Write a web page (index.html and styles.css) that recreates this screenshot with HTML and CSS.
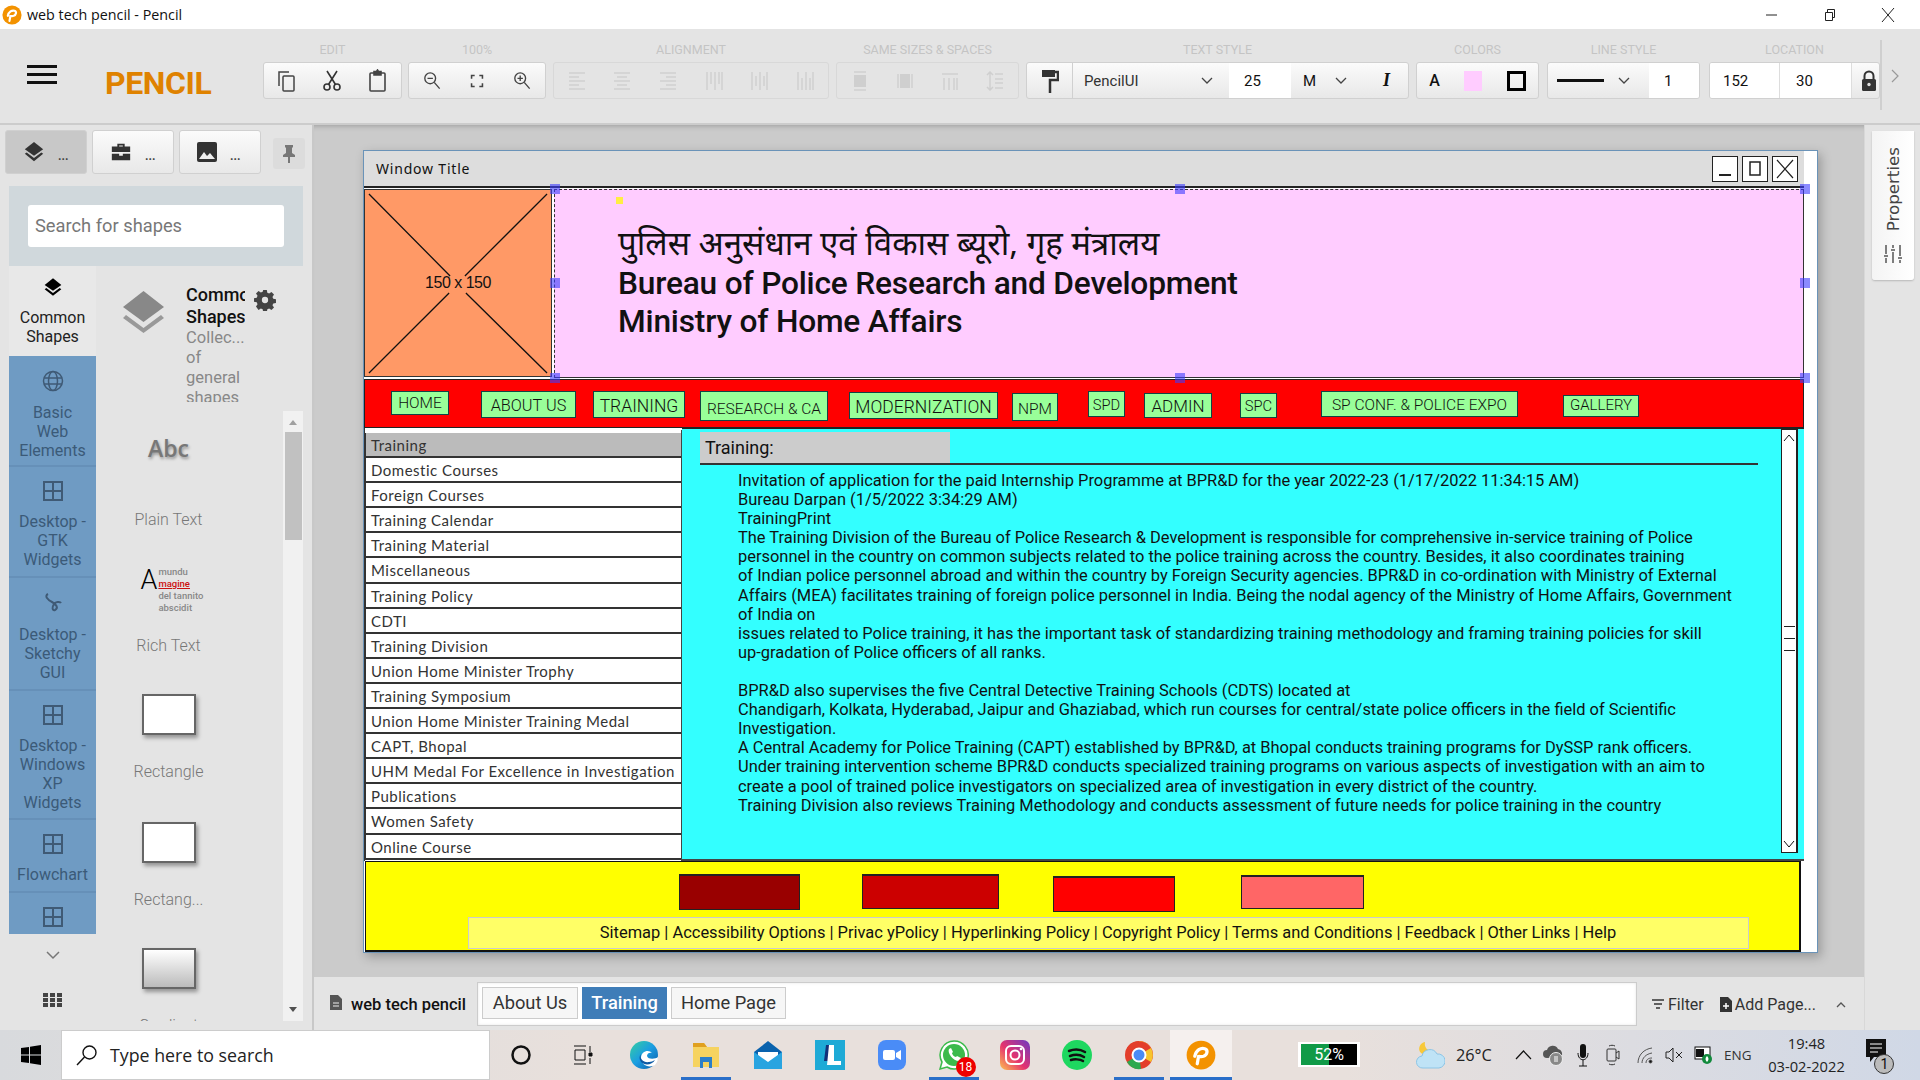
FILE: index.html
```html
<!DOCTYPE html>
<html lang="en">
<head>
<meta charset="utf-8">
<title>web tech pencil - Pencil</title>
<link rel="stylesheet" href="styles.css">
</head>
<body>
<svg class="defs" width="0" height="0">
  <symbol id="grid4" viewBox="0 0 20 20"><path d="M1 1h18v18H1zM10 1v18M1 10h18" fill="none" stroke="currentColor" stroke-width="2"/></symbol>
  <symbol id="layers" viewBox="0 0 24 24"><path d="M12 1 2 9l10 7 10-7z" fill="currentColor"/><path d="m2 14 10 8 10-8-2-1.500-8 6-8-6z" fill="currentColor"/></symbol>
  <symbol id="pencilp" viewBox="0 0 24 24"><circle cx="12" cy="12" r="11.500" fill="#f39200"/><path d="M7 13c1-5 5-7 8-6 3 1 2 5-1 6-2 .6-3 0-4 .2L9 19" fill="none" stroke="#fff" stroke-width="2.600" stroke-linecap="round"/></symbol>
</svg>

<header class="titlebar">
  <svg class="app-ico" width="20" height="24" viewBox="0 0 24 24"><use href="#pencilp"/></svg>
  <span class="app-title">web tech pencil - Pencil</span>
  <div class="winctl">
    <svg width="16" height="16" viewBox="0 0 16 16"><path d="M2 8h11" stroke="#222" fill="none"/></svg>
    <svg width="16" height="16" viewBox="0 0 16 16"><path d="M3.500 5.500h7v8h-7zM5.500 5.500v-3h7v8h-2" stroke="#222" fill="none"/></svg>
    <svg width="16" height="16" viewBox="0 0 16 16"><path d="m2 1 12 14M14 1 2 15" stroke="#222" fill="none"/></svg>
  </div>
</header>

<div class="toolbar">
  <div class="burger"><i></i><i></i><i></i></div>
  <div class="logo">PENCIL</div>
  <div class="tb-sec s1"><div class="tb-label">EDIT</div><div class="tb-group">
    <svg width="22" height="24" viewBox="0 0 22 24" fill="none" stroke="#444" stroke-width="1.500"><path d="M3 17V3h10"/><rect x="7" y="7" width="11" height="15" rx="1"/></svg>
    <svg width="22" height="24" viewBox="0 0 22 24" fill="none" stroke="#333" stroke-width="1.600"><circle cx="6" cy="18" r="3"/><circle cx="16" cy="18" r="3"/><path d="M7.500 15.500 16 2M14.500 15.500 6 2"/></svg>
    <svg width="22" height="24" viewBox="0 0 22 24" fill="none" stroke="#444" stroke-width="1.600"><rect x="3" y="4" width="15" height="18" rx="1"/><path d="M7 4V2.500h2.500L10.500 1l1 1.500H14V6H7z" fill="#444"/></svg>
  </div></div>
  <div class="tb-sec s2"><div class="tb-label">100%</div><div class="tb-group">
    <svg width="18" height="20" viewBox="0 0 20 22" fill="none" stroke="#444" stroke-width="1.500"><circle cx="8" cy="8" r="6"/><path d="m12.500 12.500 6 7M5 8h6"/></svg>
    <svg width="14" height="14" viewBox="0 0 18 18" fill="none" stroke="#444" stroke-width="2"><path d="M2 6V2h4M12 2h4v4M16 12v4h-4M6 16H2v-4"/></svg>
    <svg width="18" height="20" viewBox="0 0 20 22" fill="none" stroke="#444" stroke-width="1.500"><circle cx="8" cy="8" r="6"/><path d="m12.500 12.500 6 7M5 8h6M8 5v6"/></svg>
  </div></div>
  <div class="tb-sec s3"><div class="tb-label">ALIGNMENT</div><div class="tb-group dim">
    <svg width="18" height="20" viewBox="0 0 18 20"><path d="M1 2h16M1 6h10M1 10h16M1 14h10M1 18h16"/></svg>
    <svg width="18" height="20" viewBox="0 0 18 20"><path d="M1 2h16M4 6h10M1 10h16M4 14h10M1 18h16"/></svg>
    <svg width="18" height="20" viewBox="0 0 18 20"><path d="M1 2h16M7 6h10M1 10h16M7 14h10M1 18h16"/></svg>
    <svg width="18" height="20" viewBox="0 0 18 20"><path d="M2 1v18M6 1v12M10 1v18M14 1v12M17 1v18"/></svg>
    <svg width="18" height="20" viewBox="0 0 18 20"><path d="M2 1v18M6 5v10M10 1v18M14 5v10M17 1v18"/></svg>
    <svg width="18" height="20" viewBox="0 0 18 20"><path d="M2 1v18M6 7v12M10 1v18M14 7v12M17 1v18"/></svg>
  </div></div>
  <div class="tb-sec s4"><div class="tb-label">SAME SIZES &amp; SPACES</div><div class="tb-group dim">
    <svg width="18" height="20" viewBox="0 0 18 20"><path d="M3 1h12M3 19h12"/><path class="fill" d="M3 4h12v12H3z"/></svg>
    <svg width="18" height="20" viewBox="0 0 18 20"><path d="M2 3v14M16 3v14"/><path class="fill" d="M4 3h10v14H4z"/></svg>
    <svg width="18" height="20" viewBox="0 0 18 20"><path d="M1 3h16M3 7v12M8 7v12M13 7v12M16 7v12"/></svg>
    <svg width="18" height="20" viewBox="0 0 18 20"><path d="M4 1v18M1 4l3-3 3 3M1 16l3 3 3-3M9 3h8M9 8h8M9 12h8M9 17h8"/></svg>
  </div></div>
  <div class="tb-sec s5"><div class="tb-label">TEXT STYLE</div><div class="tb-group seg">
    <div class="cell c-brush"><svg width="18" height="26" viewBox="0 0 18 26"><path d="M1 2h13v7H1z" fill="#333"/><path d="M14 4h3v8H9v13" fill="none" stroke="#333" stroke-width="2.500"/></svg></div>
    <div class="cell c-font"><span>PencilUI</span><svg width="12" height="8" viewBox="0 0 12 8"><path d="m1 1 5 5 5-5" fill="none" stroke="#444" stroke-width="1.300"/></svg></div>
    <div class="cell c-size">25</div>
    <div class="cell c-weight"><span>M</span><svg width="12" height="8" viewBox="0 0 12 8"><path d="m1 1 5 5 5-5" fill="none" stroke="#444" stroke-width="1.300"/></svg><b class="ital">I</b></div>
  </div></div>
  <div class="tb-sec s6"><div class="tb-label">COLORS</div><div class="tb-group">
    <span class="col-a">A</span><i class="col-pink"></i><i class="col-box"></i>
  </div></div>
  <div class="tb-sec s7"><div class="tb-label">LINE STYLE</div><div class="tb-group seg">
    <div class="cell c-line"><i class="line-sample"></i><svg width="12" height="8" viewBox="0 0 12 8"><path d="m1 1 5 5 5-5" fill="none" stroke="#444" stroke-width="1.300"/></svg></div>
    <div class="cell c-lw">1</div>
  </div></div>
  <div class="tb-sec s8"><div class="tb-label">LOCATION</div><div class="tb-group seg">
    <div class="cell c-loc">152</div><div class="cell c-loc">30</div>
    <div class="cell c-lock"><svg width="16" height="22" viewBox="0 0 16 22"><path d="M3.500 9V6a4.500 4.500 0 0 1 9 0v3" fill="none" stroke="#333" stroke-width="2"/><rect x="1" y="9" width="14" height="12" rx="1.500" fill="#333"/><circle cx="8" cy="14.500" r="1.700" fill="#ddd"/></svg></div>
  </div></div>
  <i class="tb-sep"></i>
  <svg class="tb-more" width="10" height="16" viewBox="0 0 10 16"><path d="m2 2 6 6-6 6" fill="none" stroke="#999" stroke-width="1.200"/></svg>
</div>

<main class="main">
  <aside class="left">
    <div class="left-tabs">
      <div class="ltab active"><svg width="22" height="22" viewBox="0 0 24 24" class="ink"><use href="#layers"/></svg><span>...</span></div>
      <div class="ltab"><svg width="22" height="22" viewBox="0 0 24 24"><path d="M8 6V3h8v3h6v6H2V6zm2-1v1h4V5zM2 14h8v2h4v-2h8v7H2z" fill="#333"/></svg><span>...</span></div>
      <div class="ltab"><svg width="20" height="20" viewBox="0 0 20 20"><rect width="20" height="20" rx="2" fill="#333"/><path d="m2 17 5-7 3 4 3-3 5 6z" fill="#eee"/></svg><span>...</span></div>
      <div class="pin"><svg width="14" height="20" viewBox="0 0 14 20"><path d="M3 1h8v2l-1 1v5l3 2v2H8v6H6v-6H1v-2l3-2V4L3 3z" fill="#777"/></svg></div>
    </div>
    <div class="search-wrap"><div class="search-box">Search for shapes</div></div>
    <div class="left-body">
      <div class="coll-col">
        <div class="coll selected"><svg width="20" height="21" viewBox="0 0 24 24"><use href="#layers"/></svg><span>Common Shapes</span></div>
        <div class="coll c1"><svg width="22" height="22" viewBox="0 0 22 22" fill="none" stroke="currentColor" stroke-width="1.500"><circle cx="11" cy="11" r="9.500"/><ellipse cx="11" cy="11" rx="4.500" ry="9.500"/><path d="M2 8h18M2 14h18"/></svg><span>Basic Web Elements</span></div>
        <div class="coll c2"><svg width="20" height="20"><use href="#grid4"/></svg><span>Desktop - GTK Widgets</span></div>
        <div class="coll c3"><svg width="22" height="22" viewBox="0 0 22 22" fill="none" stroke="currentColor" stroke-width="2"><path d="M6 2c-4 2 0 6 4 8s7 6 3 8c-3 1-3-3-1-6 1-2 6-3 7-1"/></svg><span>Desktop - Sketchy GUI</span></div>
        <div class="coll c4"><svg width="20" height="20"><use href="#grid4"/></svg><span>Desktop - Windows XP Widgets</span></div>
        <div class="coll c5"><svg width="20" height="20"><use href="#grid4"/></svg><span>Flowchart</span></div>
        <div class="coll c6"><svg width="20" height="20"><use href="#grid4"/></svg></div>
        <div class="coll-foot">
          <svg width="14" height="9" viewBox="0 0 14 9"><path d="m1 1 6 6 6-6" fill="none" stroke="#777" stroke-width="1.500"/></svg>
          <svg width="19" height="14" viewBox="0 0 19 14"><path fill="#444" d="M0 0h5v4H0zM7 0h5v4H7zM14 0h5v4h-5zM0 5h5v4H0zM7 5h5v4H7zM14 5h5v4h-5zM0 10h5v4H0zM7 10h5v4H7zM14 10h5v4h-5z"/></svg>
        </div>
      </div>
      <div class="shapes">
        <div class="shapes-head">
          <svg class="head-ico" width="43" height="44" viewBox="0 0 43 44"><path d="M21.500 1 42 17 21.500 32 1 17z" fill="#888"/><path d="m1 28 3-3 17.500 13L39 25l3 3-20.500 15z" fill="#999"/></svg>
          <div class="head-text"><b>Common Shapes</b><span>Collec... of general shapes</span></div>
          <svg class="gear" width="22" height="22" viewBox="0 0 22 22"><path fill="#444" fill-rule="evenodd" d="M9 0h4l.6 3 2 .9 2.600-1.700 2.800 2.800-1.700 2.600.9 2 3 .6v4l-3 .6-.9 2 1.700 2.600-2.800 2.800-2.600-1.700-2 .9-.6 3H9l-.6-3-2-.9-2.600 1.700L1 18.200l1.700-2.600-.9-2-3-.6V9l3-.6.9-2L1 3.800 3.800 1l2.600 1.700 2-.9zM11 7.500a3.500 3.500 0 1 0 0 7 3.500 3.500 0 0 0 0-7z" transform="translate(1.100 1.100) scale(.9)"/></svg>
        </div>
        <div class="shape-list">
          <div class="shape-items">
            <div class="shape sh1"><div class="abc">Abc</div><label>Plain Text</label></div>
            <div class="shape sh2"><div class="rich"><em>A</em><p><s>mundu</s><u>magine</u><s>del tannito</s><s>abscidit</s></p></div><label>Rich Text</label></div>
            <div class="shape sh3"><div class="rect"></div><label>Rectangle</label></div>
            <div class="shape sh4"><div class="rect"></div><label>Rectang...</label></div>
            <div class="shape sh5"><div class="rect grad"></div><label>Gradient</label></div>
          </div>
          <div class="sbar"><i class="up"></i><i class="thumb"></i><i class="down"></i></div>
        </div>
      </div>
    </div>
  </aside>

  <section class="center">
    <div class="canvas">
      <div class="page">
        <div class="win">
          <div class="win-title"><span>Window Title</span>
            <div class="win-btns">
              <div><svg width="18" height="18" viewBox="0 0 18 18"><path d="M3 15h12" stroke="#222" stroke-width="2"/></svg></div>
              <div><svg width="18" height="18" viewBox="0 0 18 18"><path d="M4 2h10v13H4z" fill="none" stroke="#222" stroke-width="1.500"/></svg></div>
              <div><svg width="20" height="20" viewBox="0 0 20 20"><path d="m2 1 16 18M18 1 2 19" stroke="#222" stroke-width="1.200"/></svg></div>
            </div>
          </div>
          <div class="banner">
            <div class="ph"><svg class="ph-x" viewBox="0 0 188 186" preserveAspectRatio="none"><path d="M4 4 86 86M184 4 101 86M4 183 85 103M102 103 184 183" fill="none" stroke="#111" stroke-width="1.300"/></svg><span>150 x 150</span></div>
            <div class="pink">
              <div class="hin">पुलिस अनुसंधान एवं विकास ब्यूरो, गृह मंत्रालय</div>
              <div class="eng">Bureau of Police Research and Development</div>
              <div class="eng">Ministry of Home Affairs</div>
            </div>
            <i class="h h-tl"></i><i class="h h-ml"></i><i class="h h-bl"></i><i class="h h-tm"></i><i class="h h-bm"></i><i class="h h-tr"></i><i class="h h-mr"></i><i class="h h-br"></i><i class="ydot"></i>
          </div>
          <nav class="nav">
            <a class="nb n1">HOME</a><a class="nb n2">ABOUT US</a><a class="nb n3">TRAINING</a><a class="nb n4">RESEARCH &amp; CA</a><a class="nb n5">MODERNIZATION</a><a class="nb n6">NPM</a><a class="nb n7">SPD</a><a class="nb n8">ADMIN</a><a class="nb n9">SPC</a><a class="nb n10">SP CONF. &amp; POLICE EXPO</a><a class="nb n11">GALLERY</a>
          </nav>
          <div class="content">
            <ul class="menu">
              <li class="on">Training</li><li>Domestic Courses</li><li>Foreign Courses</li><li>Training Calendar</li><li>Training Material</li><li>Miscellaneous</li><li>Training Policy</li><li>CDTI</li><li>Training Division</li><li>Union Home Minister Trophy</li><li>Training Symposium</li><li>Union Home Minister Training Medal</li><li>CAPT, Bhopal</li><li>UHM Medal For Excellence in Investigation</li><li>Publications</li><li>Women Safety</li><li>Online Course</li>
            </ul>
            <div class="cyan">
              <div class="article">
                <div class="art-head"><div class="art-title">Training:</div></div>
                <p class="art-text">Invitation of application for the paid Internship Programme at BPR&amp;D for the year 2022-23 (1/17/2022 11:34:15 AM)<br>Bureau Darpan (1/5/2022 3:34:29 AM)<br>TrainingPrint<br>The Training Division of the Bureau of Police Research &amp; Development is responsible for comprehensive in-service training of Police<br>personnel in the country on common subjects related to the police training across the country. Besides, it also coordinates training<br>of Indian police personnel abroad and within the country by Foreign Security agencies. BPR&amp;D in co-ordination with Ministry of External<br>Affairs (MEA) facilitates training of foreign police personnel in India. Being the nodal agency of the Ministry of Home Affairs, Government<br>of India on<br>issues related to Police training, it has the important task of standardizing training methodology and framing training policies for skill<br>up-gradation of Police officers of all ranks.<br><br>BPR&amp;D also supervises the five Central Detective Training Schools (CDTS) located at<br>Chandigarh, Kolkata, Hyderabad, Jaipur and Ghaziabad, which run courses for central/state police officers in the field of Scientific<br>Investigation.<br>A Central Academy for Police Training (CAPT) established by BPR&amp;D, at Bhopal conducts training programs for DySSP rank officers.<br>Under training intervention scheme BPR&amp;D conducts specialized training programs on various aspects of investigation with an aim to<br>create a pool of trained police investigators on specialized area of investigation in every district of the country.<br>Training Division also reviews Training Methodology and conducts assessment of future needs for police training in the country</p>
              </div>
              <div class="vscroll">
                <svg width="14" height="10" viewBox="0 0 14 10"><path d="m2 8 5-6 5 6" fill="none" stroke="#111"/></svg>
                <div class="grip"><i></i><i></i><i></i></div>
                <svg width="14" height="10" viewBox="0 0 14 10"><path d="m2 2 5 6 5-6" fill="none" stroke="#111"/></svg>
              </div>
            </div>
          </div>
          <footer class="foot">
            <div class="swatches"><i class="sw s-a"></i><i class="sw s-b"></i><i class="sw s-c"></i><i class="sw s-d"></i></div>
            <div class="foot-links">Sitemap | Accessibility Options | Privac yPolicy | Hyperlinking Policy | Copyright Policy | Terms and Conditions | Feedback | Other Links | Help</div>
          </footer>
        </div>
      </div>
    </div>
    <div class="pagebar">
      <svg width="12" height="15" viewBox="0 0 12 15"><path d="M0 0h8l4 4v11H0z" fill="#555"/><path d="M3 8h6M3 11h6" stroke="#eee"/></svg>
      <b class="doc">web tech pencil</b>
      <div class="pages"><span class="ptab p1">About Us</span><span class="ptab p2 cur">Training</span><span class="ptab p3">Home Page</span></div>
      <div class="pb-act">
        <svg width="14" height="10" viewBox="0 0 14 10"><path d="M1 1h12M3 5h8M5 9h4" stroke="#333" stroke-width="1.500"/></svg><span class="a1">Filter</span>
        <svg width="12" height="15" viewBox="0 0 12 15"><path d="M0 0h8l4 4v11H0z" fill="#333"/><path d="M3 9h6M6 6v6" stroke="#fff" stroke-width="1.500"/></svg><span class="a2">Add Page...</span>
        <svg width="10" height="7" viewBox="0 0 10 7"><path d="m1 6 4-4 4 4" fill="none" stroke="#555" stroke-width="1.300"/></svg>
      </div>
    </div>
  </section>

  <aside class="props">
    <div class="props-tab">
      <span>Properties</span>
      <svg width="20" height="22" viewBox="0 0 20 20" fill="none" stroke="#555" stroke-width="1.500"><path d="M3 1v9M3 14v5M1 12h4M10 1v3M10 8v11M8 6h4M17 1v11M17 16v3M15 14h4"/></svg>
    </div>
  </aside>
</main>

<footer class="taskbar">
  <div class="start"><svg width="20" height="20" viewBox="0 0 20 20"><path d="M0 3l8-1v7.500H0zM9 1.800 20 0v9.500H9zM0 10.500h8V18l-8-1zM9 10.500h11V20L9 18.200z" fill="#000"/></svg></div>
  <div class="tsearch"><svg width="22" height="22" viewBox="0 0 22 22" fill="none" stroke="#111" stroke-width="1.400"><circle cx="13.500" cy="8.500" r="6.500"/><path d="M8.500 13 1 21"/></svg><span>Type here to search</span></div>
  <div class="tasks">
    <div class="ti"><svg width="22" height="22" viewBox="0 0 22 22"><circle cx="11" cy="11" r="8.500" fill="none" stroke="#111" stroke-width="2.500"/></svg></div>
    <div class="ti"><svg width="22" height="22" viewBox="0 0 22 22" fill="none" stroke="#111"><path d="M2 2h12M2 20h12M3 6h10v10H3zM18 2v6M18 14v6"/><path d="M17 9h3v3h-3z" fill="#111"/></svg></div>
    <div class="ti"><svg width="30" height="30" viewBox="0 0 30 30"><defs><linearGradient id="eg" x1="0" y1="0" x2="1" y2="1"><stop offset="0" stop-color="#36d0a0"/><stop offset=".5" stop-color="#1b9de2"/><stop offset="1" stop-color="#0c59a4"/></linearGradient></defs><circle cx="15" cy="15" r="14" fill="url(#eg)"/><path d="M29 17c-2 2-10 3-11-1 0-3 3-4 5-3-3-4-11-2-11 5 0 6 7 11 14 7 2-2 3-5 3-8z" fill="#fff"/><path d="M26 20c-3 5-10 6-14 2-2-3-2-6 0-8-2 5 3 9 8 8 2 0 4-1 6-2z" fill="#0c59a4"/></svg></div>
    <div class="ti on"><svg width="28" height="26" viewBox="0 0 28 26"><path d="M1 1h11l3 4h12v20H1z" fill="#f6d360"/><path d="M1 1h11l3 4H1z" fill="#e0a020"/><path d="M8 26V15h12v11h-3v-6h-6v6z" fill="#2c7fc9"/></svg></div>
    <div class="ti"><svg width="30" height="30" viewBox="0 0 30 30"><path d="M15 1 29 12v17H1V12z" fill="#0a62ad"/><path d="M5 12h20v8l-10 5-10-5z" fill="#fff"/><path d="M1 12l14 10 14-10v17H1z" fill="#29a4e0"/></svg></div>
    <div class="ti"><svg width="30" height="30" viewBox="0 0 30 30"><rect width="30" height="30" fill="#1eaad6"/><path d="M11 5h5v16h-7z" fill="#12307a"/><path d="M14 5h5v16h7v4H12z" fill="#fff"/></svg></div>
    <div class="ti"><svg width="28" height="30" viewBox="0 0 28 30"><rect width="28" height="30" rx="8" fill="#4a8cf7"/><rect x="5" y="10" width="12" height="10" rx="2" fill="#fff"/><path d="m18 13 5-3v10l-5-3z" fill="#fff"/></svg></div>
    <div class="ti on badge-host"><svg width="30" height="30" viewBox="0 0 30 30"><path d="M15 1a14 14 0 0 0-12 21L1 29l7-2A14 14 0 1 0 15 1z" fill="#fff" stroke="#3cba4b" stroke-width="1.500"/><circle cx="15" cy="15" r="11" fill="#3cba4b"/><path d="M10 9c-2 4 4 12 10 12l2-3-4-2-1 1c-2 0-4-3-4-4l1-1-2-4z" fill="#fff"/></svg><b class="badge">18</b></div>
    <div class="ti"><svg width="30" height="30" viewBox="0 0 30 30"><defs><linearGradient id="ig" x1="0" y1="1" x2="1" y2="0"><stop offset="0" stop-color="#fdc150"/><stop offset=".45" stop-color="#e5326e"/><stop offset="1" stop-color="#6a3bc4"/></linearGradient></defs><rect width="30" height="30" rx="7" fill="url(#ig)"/><rect x="6" y="6" width="18" height="18" rx="5" fill="none" stroke="#fff" stroke-width="2"/><circle cx="15" cy="15" r="4.500" fill="none" stroke="#fff" stroke-width="2"/><circle cx="21" cy="9" r="1.300" fill="#fff"/></svg></div>
    <div class="ti"><svg width="30" height="30" viewBox="0 0 30 30"><circle cx="15" cy="15" r="15" fill="#1ed760"/><path d="M7 11c5-2 11-2 16 1M8 16c4-1.500 10-1.500 14 1M9 20c3-1 9-1 12 1" fill="none" stroke="#111" stroke-width="2.500" stroke-linecap="round"/></svg></div>
    <div class="ti on"><svg width="30" height="30" viewBox="0 0 30 30"><circle cx="15" cy="15" r="14" fill="#e33e2b"/><path d="M15 15 3 22a14 14 0 0 0 14 7z" fill="#2da94f"/><path d="M15 1a14 14 0 0 1 12 21l-12-7z" fill="#f7c42d"/><path d="M15 15 3 8A14 14 0 0 1 27 8z" fill="#e33e2b"/><circle cx="15" cy="15" r="6.500" fill="#4b8bf5" stroke="#fff" stroke-width="2"/></svg></div>
    <div class="ti on cur"><svg width="30" height="30" viewBox="0 0 24 24"><use href="#pencilp"/></svg></div>
  </div>
  <div class="tray">
    <div class="batt"><span>52%</span></div>
    <svg class="w-ico" width="29" height="30" viewBox="0 0 29 30"><path d="M9 2c-1 5 2 9 8 9-2 3-8 5-12 2C1 9 4 3 9 2z" fill="#f8c93a"/><path d="M7 28a6 6 0 0 1-1-12 8 8 0 0 1 15-2 7 7 0 0 1 2 14z" fill="#bfe3f6" stroke="#8cc5e6"/></svg>
    <span class="temp">26°C</span>
    <svg class="t1" width="17" height="10" viewBox="0 0 17 10"><path d="m1 9 7.500-8L16 9" fill="none" stroke="#111" stroke-width="1.200"/></svg>
    <svg class="t2" width="21" height="24" viewBox="0 0 21 24"><path d="M5 15a4 4 0 0 1 0-8 6 6 0 0 1 11-1 5 5 0 0 1 3 8z" fill="#555"/><circle cx="14" cy="16" r="6.500" fill="#888" stroke="#eee"/><path d="M13 13v6M15 13v6" stroke="#fff"/></svg>
    <svg class="t3" width="12" height="24" viewBox="0 0 12 24"><rect x="3" y="1" width="6" height="14" rx="3" fill="#111"/><path d="M1 10c0 9 10 9 10 0M6 17v6M2 23h8" fill="none" stroke="#111"/></svg>
    <svg class="t4" width="14" height="24" viewBox="0 0 14 24" fill="none" stroke="#333"><rect x="1" y="6" width="9" height="12" rx="1"/><path d="m10 10 3-2v8l-3-2M3 3c2-1 4-1 6 0M3 21c2 1 4 1 6 0"/></svg>
    <svg class="t5" width="16" height="18" viewBox="0 0 16 18" fill="none" stroke="#555"><path d="M1 17C1 9 7 3 15 2M5 17c0-5 4-9 10-10M9 17c0-3 2-5 6-5"/><circle cx="13.500" cy="15.500" r="1.500" fill="#111"/></svg>
    <svg class="t6" width="18" height="16" viewBox="0 0 18 16" fill="none" stroke="#222"><path d="M1 5h3l4-4v14l-4-4H1zM11 5l6 6M17 5l-6 6"/></svg>
    <svg class="t7" width="18" height="20" viewBox="0 0 18 20"><rect x="1" y="2" width="15" height="12" fill="#fff" stroke="#111"/><rect x="2" y="4" width="8" height="8" fill="#111"/><circle cx="13" cy="14" r="5" fill="#118a3c"/><path d="M13 11c-2 2-2 4 0 6 2-2 2-4 0-6z" fill="#fff"/></svg>
    <span class="eng-l">ENG</span>
    <div class="clock"><span>19:48</span><span>03-02-2022</span></div>
    <div class="notif"><svg width="20" height="24" viewBox="0 0 20 24"><path d="M0 0h20v18H8l-4 5v-5H0z" fill="#111"/><path d="M4 5h12M4 9h12M4 13h8" stroke="#fff"/></svg><b>1</b></div>
  </div>
</footer>
</body>
</html>
```

FILE: styles.css
```css
* { box-sizing: border-box; }
html, body { margin: 0; padding: 0; }
body { width: 1920px; height: 1080px; overflow: hidden; display: flex; flex-direction: column; font-family: Roboto, "Liberation Sans", sans-serif; color: #111; background: #e4e4e4; position: relative; }
i, em { font-style: normal; }
.defs { position: absolute; }

.titlebar { height: 29px; background: #fff; display: flex; align-items: center; padding-left: 2px; flex: none; }
.app-title { font-family: "Open Sans", sans-serif; font-size: 14.300px; margin-left: 5px; color: #111; }
.winctl { margin-left: auto; display: flex; gap: 42px; padding-right: 24px; }

.toolbar { height: 96px; flex: none; display: flex; background: #e4e4e4; padding-top: 12px; border-bottom: 2px solid #ccc; position: relative; }
.burger { width: 30px; margin: 24px 0 0 27px; display: flex; flex-direction: column; gap: 5px; }
.burger i { display: block; height: 3px; background: #111; }
.logo { font-size: 32px; font-weight: 700; color: #df8200; margin: 22px 0 0 48px; width: 158px; line-height: 40px; letter-spacing: -.4px; }
.tb-sec { display: flex; flex-direction: column; margin-right: 6px; }
.tb-label { height: 21px; font-size: 12.500px; line-height: 18px; color: #c4c4c4; text-align: center; white-space: nowrap; }
.tb-group { height: 37px; border: 1px solid #d0d0d0; border-radius: 3px; background: linear-gradient(#fbfbfb, #e8e8e8); display: flex; align-items: center; justify-content: space-around; }
.s1 { width: 139px; } .s2 { width: 138px; } .s3 { width: 276px; margin-left: 1px; } .s4 { width: 183px; margin-left: 1px; }
.s5 { width: 383px; margin-left: 1px; } .s6 { width: 123px; margin-left: 1px; } .s7 { width: 153px; margin-left: 2px; } .s8 { width: 171px; margin-left: 3px; margin-right: 0; }
.tb-group.dim { background: #e4e4e4; border-color: #d8d8d8; }
.dim svg { fill: none; stroke: #cfcfcf; stroke-width: 1.500; }
.dim .fill { fill: #cfcfcf; stroke: none; }
.seg { justify-content: flex-start; overflow: hidden; }
.cell { height: 100%; display: flex; align-items: center; font-size: 15px; }
.c-brush { width: 46px; justify-content: center; border-right: 1px solid #d0d0d0; }
.c-font { width: 156px; padding: 0 16px 0 11px; justify-content: space-between; color: #333; }
.c-size { width: 62px; background: #fff; padding-left: 15px; }
.c-weight { flex: 1; padding-left: 12px; }
.c-weight svg { margin-left: 19px; }
.ital { font-style: italic; font-family: "Liberation Serif", serif; font-size: 18px; margin-left: 36px; }
.col-a { font-size: 16px; font-weight: 500; }
.col-pink { width: 18px; height: 20px; background: #ffccff; }
.col-box { width: 19px; height: 20px; border: 3px solid #000; }
.c-line { width: 101px; padding: 0 19px 0 9px; justify-content: space-between; }
.line-sample { width: 47px; height: 3px; background: #111; }
.c-lw { flex: 1; background: #fff; padding-left: 15px; }
.c-loc { width: 70px; background: #fff; padding-left: 13px; border-right: 1px solid #ddd; }
.c-loc + .c-loc { width: 72px; padding-left: 16px; }
.c-lock { flex: 1; justify-content: center; padding-left: 6px; }
.tb-more { position: absolute; right: 20px; top: 39px; }
.tb-sep { position: absolute; left: 1880px; top: 11px; width: 2px; height: 70px; background: #cfcfcf; }

.main { flex: 1; display: flex; min-height: 0; }

.left { width: 314px; flex: none; background: #e4e4e4; border-right: 2px solid #c8c8c8; display: flex; flex-direction: column; padding: 5px 0 0 5px; }
.left-tabs { display: flex; gap: 5px; height: 44px; align-items: flex-start; }
.ltab { width: 82px; height: 44px; border: 1px solid #d0d0d0; border-radius: 3px; background: linear-gradient(#fbfbfb, #e8e8e8); display: flex; align-items: center; padding-left: 17px; gap: 13px; }
.ltab span { font-size: 12px; font-weight: 700; line-height: 12px; margin-top: 8px; color: #444; }
.ltab.active { background: #c8c8c8; }
.ink { color: #333; }
.pin { width: 32px; height: 31px; margin: 8px 0 0 7px; background: #dcdcdc; border-radius: 3px; display: flex; align-items: center; justify-content: center; }
.search-wrap { width: 294px; height: 80px; margin: 12px 0 0 4px; background: #d0d8dc; padding: 19px 19px; flex: none; }
.search-box { height: 42px; background: #fff; border-radius: 3px; line-height: 42px; padding-left: 7px; font-size: 18.300px; color: #777; }
.left-body { flex: 1; display: flex; margin-left: 4px; min-height: 0; }
.coll-col { width: 87px; display: flex; flex-direction: column; flex: none; }
.coll { display: flex; flex-direction: column; align-items: center; text-align: center; font-size: 16px; line-height: 19px; color: #36536f; background: #6f9bc3; border-bottom: 2px solid #6690b8; flex: none; padding-top: 14px; }
.coll span { margin-top: 11px; width: 72px; font-weight: 400; color: #3b5a78; }
.coll svg { color: #3f5a75; flex: none; }
.selected { height: 90px; background: #e8e8e8; border: 0; padding-top: 11px; }
.selected span { color: #222; margin-top: 10px; }
.selected svg { color: #000; }
.c1 { height: 111px; } .c2 { height: 111px; } .c3 { height: 113px; } .c4 { height: 129px; } .c5 { height: 73px; } .c6 { height: 41px; border: 0; }
.coll-foot { flex: 1; display: flex; flex-direction: column; align-items: center; gap: 33px; padding-top: 17px; }
.shapes { flex: 1; display: flex; flex-direction: column; min-width: 0; margin-right: 9px; }
.shapes-head { height: 145px; position: relative; display: flex; flex: none; }
.head-ico { margin: 24px 0 0 26px; flex: none; }
.head-text { width: 59px; margin: 18px 0 0 21px; height: 118px; overflow: hidden; font-size: 16.500px; line-height: 20px; color: #888; }
.head-text b { display: block; width: 80px; font-size: 18px; line-height: 22px; font-weight: 500; color: #111; }
.head-text span { display: block; width: 60px; }
.gear { margin: 23px 0 0 9px; flex: none; }
.shape-list { flex: 1; display: flex; min-height: 0; align-items: flex-start; }
.shape-items { flex: 1; height: 610px; overflow: hidden; min-width: 0; }
.shape { display: flex; flex-direction: column; align-items: center; font-size: 16px; color: #777; font-weight: 300; padding-right: 42px; }
.shape label { display: block; line-height: 20px; }
.sh1 { padding-top: 18px; height: 148px; }
.abc { font-family: "Open Sans", sans-serif; font-size: 23px; font-weight: 600; color: #777; height: 38px; line-height: 38px; text-shadow: 1px 2px 3px rgba(0,0,0,.35); margin-bottom: 43px; }
.sh2 { height: 135px; }
.rich { display: flex; height: 64px; margin-bottom: 8px; margin-top: 5px; width: 56px; }
.rich em { font-size: 27px; line-height: 32px; color: #000; }
.rich p { margin: 2px 0 0 1px; font-size: 9.500px; font-weight: 500; line-height: 12px; color: #888; white-space: nowrap; }
.rich s { display: block; text-decoration: none; }
.rich u { display: block; color: #c11; }
.sh3 { height: 128px; } .sh4 { height: 126px; }
.rect { width: 54px; height: 41px; background: #fff; border: 2px solid #666; box-shadow: 2px 3px 4px rgba(0,0,0,.35); margin-bottom: 27px; flex: none; }
.grad { background: linear-gradient(#fff, #bbb); }
.sbar { width: 20px; flex: none; background: #f1f1f1; position: relative; height: 610px; }
.sbar .thumb { position: absolute; top: 21px; left: 2px; width: 17px; height: 108px; background: #c1c1c1; }
.sbar .up { position: absolute; top: 9px; left: 6px; border: 4.500px solid transparent; border-top: 0; border-bottom: 5px solid #a0a0a0; }
.sbar .down { position: absolute; top: 596px; left: 6px; border: 4.500px solid transparent; border-bottom: 0; border-top: 5px solid #505050; }

.center { flex: 1; min-width: 0; display: flex; flex-direction: column; }
.canvas { height: 852px; flex: none; background: #cbcbcb; padding: 25px 46px 0 49px; box-shadow: inset 0 6px 6px -6px rgba(0,0,0,.3); }
.page { width: 1455px; height: 803px; background: #fff; border: 1px solid #6a93b8; box-shadow: 3px 4px 10px rgba(0,0,0,.25); }
.win { width: 1440px; height: 800px; display: flex; flex-direction: column; }
.win-title { height: 37px; flex: none; background: #ddd; border-bottom: 2px solid #222; display: flex; align-items: center; padding-left: 12px; font-size: 14px; font-family: "Noto Sans", sans-serif; letter-spacing: .8px; position: relative; }
.win-btns { position: absolute; right: 6px; top: 5px; display: flex; gap: 4px; }
.win-btns div { width: 26px; height: 26px; background: #fff; border: 1px solid #222; display: flex; align-items: center; justify-content: center; }

.banner { height: 191px; flex: none; display: flex; position: relative; padding-top: 1px; }
.ph { width: 188px; height: 188px; background: #ff9966; border: 1px solid #333; position: relative; display: flex; align-items: center; justify-content: center; flex: none; }
.ph-x { position: absolute; inset: 0; width: 100%; height: 100%; }
.ph span { position: relative; font-size: 16px; font-weight: 300; font-family: "Liberation Sans", sans-serif; letter-spacing: -.5px; }
.pink { flex: 1; margin-left: 2px; height: 189px; background: #ffccff; border: 1px solid #333; border-style: dashed solid solid dashed; padding: 30px 0 0 63px; }
.hin { font-family: "Noto Sans", "Noto Sans Devanagari", "Lohit Devanagari", "DejaVu Sans", sans-serif; font-size: 33px; line-height: 45px; height: 45px; }
.eng { font-size: 31.700px; font-weight: 500; line-height: 38px; letter-spacing: -.2px; white-space: nowrap; }
.h { position: absolute; width: 10px; height: 10px; background: rgba(60,60,255,.6); }
.h-tl { left: 186px; top: -4px; } .h-ml { left: 186px; top: 90px; } .h-bl { left: 186px; top: 185px; }
.h-tm { left: 811px; top: -4px; } .h-bm { left: 811px; top: 185px; }
.h-tr { left: 1436px; top: -4px; } .h-mr { left: 1436px; top: 90px; } .h-br { left: 1436px; top: 185px; }
.ydot { position: absolute; left: 252px; top: 9px; width: 7px; height: 7px; background: #ffee44; }

.nav { height: 49px; flex: none; background: #f00; border: 1px solid #222; display: flex; align-items: flex-start; }
.nb { flex: none; background: #99ff99; border: 1.500px solid #144; display: flex; align-items: flex-end; justify-content: center; font-family: Roboto, sans-serif; font-weight: 300; font-size: 16px; line-height: 20px; white-space: nowrap; color: #111; padding-bottom: 1px; }
.n1 { width: 58px; height: 24px; margin: 11px 0 0 26px; font-size: 15.500px; }
.n2 { width: 95px; height: 27px; margin: 11px 0 0 32px; font-size: 16.300px; }
.n3 { width: 92px; height: 27px; margin: 11px 0 0 17px; font-size: 17.500px; }
.n4 { width: 128px; height: 30px; margin: 11px 0 0 15px; font-size: 15.500px; }
.n5 { width: 149px; height: 27px; margin: 12px 0 0 21px; font-size: 17.500px; }
.n6 { width: 46px; height: 28px; margin: 13px 0 0 14px; font-size: 15.500px; }
.n7 { width: 37px; height: 26px; margin: 11px 0 0 30px; font-size: 14.700px; }
.n8 { width: 68px; height: 25px; margin: 13px 0 0 19px; font-size: 17px; }
.n9 { width: 37px; height: 25px; margin: 13px 0 0 28px; font-size: 14.700px; }
.n10 { width: 197px; height: 26px; margin: 11px 0 0 44px; font-size: 15.500px; }
.n11 { width: 76px; height: 22px; margin: 15px 0 0 45px; font-size: 15px; }

.content { height: 433px; flex: none; display: flex; padding-top: 2px; border-left: 1px solid #333; }
.menu { width: 317px; margin: 0; padding: 3px 0 0; list-style: none; flex: none; border-right: 1px solid #444; }
.menu li { height: 25.100px; border-bottom: 2px solid #333; border-left: 1px solid #333; background: #fff; padding-left: 5px; font-size: 15px; line-height: 24px; font-family: "Lato", sans-serif; font-weight: 400; letter-spacing: .5px; color: #333; white-space: nowrap; }
.menu li.on { background: #bbb; }
.cyan { flex: 1; margin-top: -2px; background: #3ff; display: flex; border-top: 1px solid #222; border-bottom: 2px solid #444; min-width: 0; }
.article { flex: 1; min-width: 0; padding: 3px 0 0 18px; }
.art-head { width: 1058px; border-bottom: 2px solid #333; height: 33px; }
.art-title { width: 250px; height: 31px; background: #ccc; font-size: 18px; line-height: 31px; padding-left: 5px; }
.art-text { margin: 6px 0 0 38px; font-size: 16.430px; line-height: 19.100px; white-space: nowrap; color: #111; }
.vscroll { width: 17px; height: 424px; flex: none; margin-right: 6px; background: #fff; border: 1px solid #222; border-right-width: 2px; display: flex; flex-direction: column; justify-content: space-between; align-items: center; padding: 3px 0; position: relative; }
.grip { position: absolute; top: 196px; left: 2px; width: 11px; display: flex; flex-direction: column; gap: 11px; }
.grip i { display: block; height: 1px; background: #222; }

.foot { height: 91px; flex: none; margin-left: 1px; width: 1436px; background: #ff0; border: 2px solid #111; border-width: 1px 2px 2px 1px; display: flex; flex-direction: column; align-items: center; }
.swatches { align-self: flex-start; display: flex; padding: 12px 0 0 313px; height: 55px; align-items: flex-start; }
.sw { display: block; border: 1px solid #222; border-top-width: 2px; flex: none; }
.s-a { width: 121px; height: 36px; background: #900; }
.s-b { width: 137px; height: 35px; background: #c00; margin-left: 62px; }
.s-c { width: 122px; height: 36px; background: #f00; margin: 2px 0 0 54px; }
.s-d { width: 123px; height: 34px; background: #f66; margin: 1px 0 0 66px; }
.foot-links { width: 1281px; height: 32px; background: #ff6; border: 1px solid #ccc; text-align: center; font-size: 16.450px; line-height: 29px; margin-left: 51px; white-space: nowrap; }

.pagebar { flex: 1; background: #e4e4e4; display: flex; align-items: flex-start; padding: 5px 0 0 16px; position: relative; }
.pagebar > svg { margin: 13px 0 0 0; flex: none; }
.doc { font-size: 16.500px; font-weight: 500; margin: 13px 0 0 9px; width: 116px; line-height: 20px; white-space: nowrap; }
.pages { width: 1160px; height: 44px; background: #fff; border: 1px solid #ccc; box-shadow: inset 0 0 3px rgba(0,0,0,.1); display: flex; gap: 4px; padding: 4px; margin-left: 10px; margin-right: 1px; }
.ptab { height: 32px; line-height: 30px; background: #f6f6f6; border: 1px solid #ccc; text-align: center; font-size: 18.300px; color: #333; font-weight: 400; }
.p1 { width: 96px; } .p2 { width: 85px; } .p3 { width: 115px; }
.cur.ptab { background: #3f7db8; border-color: #3f7db8; color: #fff; font-weight: 500; }
.pb-act { display: flex; align-items: center; height: 44px; margin-left: 13px; font-size: 16px; color: #333; }
.pb-act .a1 { margin: 0 16px 0 3px; }
.pb-act .a2 { margin: 0 20px 0 3px; white-space: nowrap; }

.props { width: 56px; flex: none; background: #e4e4e4; border-left: 1px solid #d8d8d8; padding: 6px 0 0 7px; }
.props-tab { width: 42px; height: 149px; background: linear-gradient(90deg, #f4f4f4, #fff); border-radius: 0 0 3px 3px; box-shadow: 0 1px 2px rgba(0,0,0,.2); display: flex; flex-direction: column; align-items: center; padding-top: 16px; }
.props-tab span { writing-mode: vertical-rl; transform: rotate(180deg); font-family: "DejaVu Sans", sans-serif; font-size: 16.700px; color: #444; }
.props-tab svg { margin-top: 12px; }

.taskbar { height: 50px; flex: none; display: flex; background: linear-gradient(90deg, #d8dadd, #e8e0dc 30%, #e8e0dc 70%, #d0d8e6); position: relative; }
.start { width: 61px; display: flex; align-items: center; justify-content: center; }
.tsearch { width: 429px; background: #fff; border: 1px solid #ccc; display: flex; align-items: center; padding-left: 14px; flex: none; }
.tsearch span { font-family: "Open Sans", sans-serif; font-size: 17.800px; color: #222; margin-left: 12px; }
.tasks { display: flex; }
.ti { width: 62px; height: 50px; display: flex; align-items: center; justify-content: center; position: relative; flex: none; margin-left: -.2px; }
.ti.on::after { content: ""; position: absolute; left: 6px; right: 6px; bottom: 0; height: 3px; background: #2a6fc9; }
.ti.cur { background: #f5f0ee; }
.ti.cur::after { left: 0; right: 0; }
.badge { position: absolute; left: 33px; top: 27px; width: 20px; height: 20px; border-radius: 50%; background: #e00; color: #fff; font-size: 12px; font-weight: 400; line-height: 20px; text-align: center; }
.tray { position: absolute; left: 1298px; top: 0; right: 0; height: 50px; display: flex; align-items: center; }
.batt { width: 62px; height: 25px; background: #fff; padding: 2px 3px; flex: none; margin-top: -2px; }
.batt span { display: block; height: 21px; background: linear-gradient(90deg, #109a47 50%, #000 50%); color: #fff; font-size: 16px; line-height: 21px; text-align: center; }
.w-ico { margin-left: 56px; }
.temp { font-family: "Open Sans", sans-serif; font-size: 16.300px; margin-left: 11px; width: 38px; color: #222; white-space: nowrap; }
.t1 { margin-left: 21px; } .t2 { margin-left: 10px; } .t3 { margin-left: 14px; } .t4 { margin-left: 17px; } .t5 { margin-left: 17px; } .t6 { margin-left: 12px; } .t7 { margin-left: 11px; }
.eng-l { font-family: "Open Sans", sans-serif; font-size: 13.500px; margin-left: 12px; color: #333; }
.clock { width: 78px; margin-left: 16px; display: flex; flex-direction: column; align-items: center; font-family: "Open Sans", sans-serif; font-size: 14.700px; line-height: 23px; color: #222; white-space: nowrap; }
.notif { position: relative; margin-left: 21px; width: 30px; height: 40px; }
.notif svg { margin-top: 4px; display: block; }
.notif b { position: absolute; left: 8px; top: 19px; width: 20px; height: 20px; border-radius: 50%; background: #bbb; border: 1px solid #333; font-size: 14px; font-weight: 400; line-height: 18px; text-align: center; }
```
